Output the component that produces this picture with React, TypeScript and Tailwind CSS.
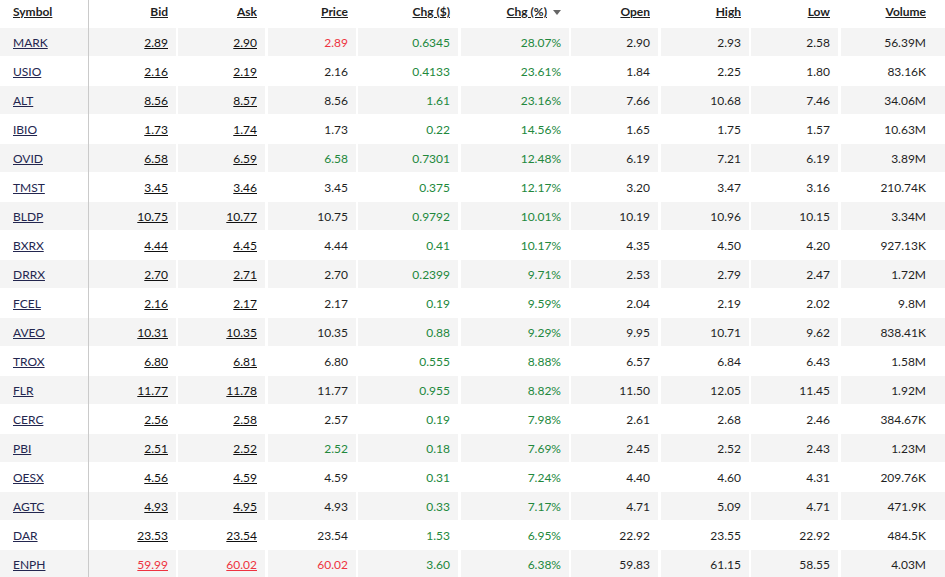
import React from "react";

type Row = {
  sym: string;
  bid: string;
  ask: string;
  price: string;
  chg: string;
  pct: string;
  open: string;
  high: string;
  low: string;
  vol: string;
  priceColor?: "red" | "green";
  quoteRed?: boolean;
};

const ROWS: Row[] = [
  { sym: "MARK", bid: "2.89", ask: "2.90", price: "2.89", chg: "0.6345", pct: "28.07%", open: "2.90", high: "2.93", low: "2.58", vol: "56.39M", priceColor: "red" },
  { sym: "USIO", bid: "2.16", ask: "2.19", price: "2.16", chg: "0.4133", pct: "23.61%", open: "1.84", high: "2.25", low: "1.80", vol: "83.16K" },
  { sym: "ALT", bid: "8.56", ask: "8.57", price: "8.56", chg: "1.61", pct: "23.16%", open: "7.66", high: "10.68", low: "7.46", vol: "34.06M" },
  { sym: "IBIO", bid: "1.73", ask: "1.74", price: "1.73", chg: "0.22", pct: "14.56%", open: "1.65", high: "1.75", low: "1.57", vol: "10.63M" },
  { sym: "OVID", bid: "6.58", ask: "6.59", price: "6.58", chg: "0.7301", pct: "12.48%", open: "6.19", high: "7.21", low: "6.19", vol: "3.89M", priceColor: "green" },
  { sym: "TMST", bid: "3.45", ask: "3.46", price: "3.45", chg: "0.375", pct: "12.17%", open: "3.20", high: "3.47", low: "3.16", vol: "210.74K" },
  { sym: "BLDP", bid: "10.75", ask: "10.77", price: "10.75", chg: "0.9792", pct: "10.01%", open: "10.19", high: "10.96", low: "10.15", vol: "3.34M" },
  { sym: "BXRX", bid: "4.44", ask: "4.45", price: "4.44", chg: "0.41", pct: "10.17%", open: "4.35", high: "4.50", low: "4.20", vol: "927.13K" },
  { sym: "DRRX", bid: "2.70", ask: "2.71", price: "2.70", chg: "0.2399", pct: "9.71%", open: "2.53", high: "2.79", low: "2.47", vol: "1.72M" },
  { sym: "FCEL", bid: "2.16", ask: "2.17", price: "2.17", chg: "0.19", pct: "9.59%", open: "2.04", high: "2.19", low: "2.02", vol: "9.8M" },
  { sym: "AVEO", bid: "10.31", ask: "10.35", price: "10.35", chg: "0.88", pct: "9.29%", open: "9.95", high: "10.71", low: "9.62", vol: "838.41K" },
  { sym: "TROX", bid: "6.80", ask: "6.81", price: "6.80", chg: "0.555", pct: "8.88%", open: "6.57", high: "6.84", low: "6.43", vol: "1.58M" },
  { sym: "FLR", bid: "11.77", ask: "11.78", price: "11.77", chg: "0.955", pct: "8.82%", open: "11.50", high: "12.05", low: "11.45", vol: "1.92M" },
  { sym: "CERC", bid: "2.56", ask: "2.58", price: "2.57", chg: "0.19", pct: "7.98%", open: "2.61", high: "2.68", low: "2.46", vol: "384.67K" },
  { sym: "PBI", bid: "2.51", ask: "2.52", price: "2.52", chg: "0.18", pct: "7.69%", open: "2.45", high: "2.52", low: "2.43", vol: "1.23M", priceColor: "green" },
  { sym: "OESX", bid: "4.56", ask: "4.59", price: "4.59", chg: "0.31", pct: "7.24%", open: "4.40", high: "4.60", low: "4.31", vol: "209.76K" },
  { sym: "AGTC", bid: "4.93", ask: "4.95", price: "4.93", chg: "0.33", pct: "7.17%", open: "4.71", high: "5.09", low: "4.71", vol: "471.9K" },
  { sym: "DAR", bid: "23.53", ask: "23.54", price: "23.54", chg: "1.53", pct: "6.95%", open: "22.92", high: "23.55", low: "22.92", vol: "484.5K" },
  { sym: "ENPH", bid: "59.99", ask: "60.02", price: "60.02", chg: "3.60", pct: "6.38%", open: "59.83", high: "61.15", low: "58.55", vol: "4.03M", priceColor: "red", quoteRed: true },
];

// column widths + left gaps, measured off the screenshot
const COLS = [
  "w-[87px]",
  "w-[87px] ml-[2px]",
  "w-[88px] ml-[3px]",
  "w-[100px] ml-[2px]",
  "w-[108px] ml-[3px]",
  "w-[87px] ml-[2px]",
  "w-[88px] ml-[3px]",
  "w-[87px] ml-[2px]",
  "flex-1 ml-[3px] !pr-[19px]",
];

const HEADERS = ["Bid", "Ask", "Price", "Chg ($)", "Chg (%)", "Open", "High", "Low", "Volume"];

const RED = "text-[#ee3341]";
const GREEN = "text-[#22883c]";

function Cell({ i, bg, children }: { i: number; bg: string; children: React.ReactNode }) {
  return (
    <div className={`${COLS[i]} ${bg} h-[28px] shrink-0 flex items-center justify-end pr-[8px] pt-[2px]`}>
      {children}
    </div>
  );
}

export default function App() {
  return (
    <div className="w-[945px] h-[577px] overflow-hidden bg-white text-[12px] text-[#1f1f1f] font-['Lato','Open_Sans',sans-serif]">
      {/* header */}
      <div className="flex h-[28px]">
        <div className="w-[89px] shrink-0 border-r border-[#cacaca] flex items-center pl-[13px] pb-[4px]">
          <span className="font-bold underline">Symbol</span>
        </div>
        {HEADERS.map((h, i) => (
          <div
            key={h}
            className={`${COLS[i]} shrink-0 flex items-center justify-end pr-[8px] pb-[4px]`}
          >
            <span className="font-bold underline">{h}</span>
            {h === "Chg (%)" && (
              <svg width="8" height="5" viewBox="0 0 8 5" className="ml-[6px] mt-[1px]">
                <path d="M0 0h8L4 5z" fill="#666" />
              </svg>
            )}
          </div>
        ))}
      </div>

      {ROWS.map((r, idx) => {
        const bg = idx % 2 === 0 ? "bg-[#f4f4f4]" : "bg-white";
        const quote = r.quoteRed ? `${RED} decoration-[#ee3341]` : "text-[#111]";
        const price = r.priceColor === "red" ? RED : r.priceColor === "green" ? GREEN : "";
        return (
          <div key={r.sym} className="flex h-[29px]">
            <div className="w-[89px] shrink-0 border-r border-[#cacaca]">
              <div className={`${bg} h-[28px] flex items-center pl-[13px] pt-[2px]`}>
                <span className="underline text-[#23264f]">{r.sym}</span>
              </div>
            </div>
            <Cell i={0} bg={bg}>
              <span className={`underline ${quote}`}>{r.bid}</span>
            </Cell>
            <Cell i={1} bg={bg}>
              <span className={`underline ${quote}`}>{r.ask}</span>
            </Cell>
            <Cell i={2} bg={bg}>
              <span className={price}>{r.price}</span>
            </Cell>
            <Cell i={3} bg={bg}>
              <span className={GREEN}>{r.chg}</span>
            </Cell>
            <Cell i={4} bg={bg}>
              <span className={GREEN}>{r.pct}</span>
            </Cell>
            <Cell i={5} bg={bg}>{r.open}</Cell>
            <Cell i={6} bg={bg}>{r.high}</Cell>
            <Cell i={7} bg={bg}>{r.low}</Cell>
            <Cell i={8} bg={bg}>{r.vol}</Cell>
          </div>
        );
      })}
    </div>
  );
}
